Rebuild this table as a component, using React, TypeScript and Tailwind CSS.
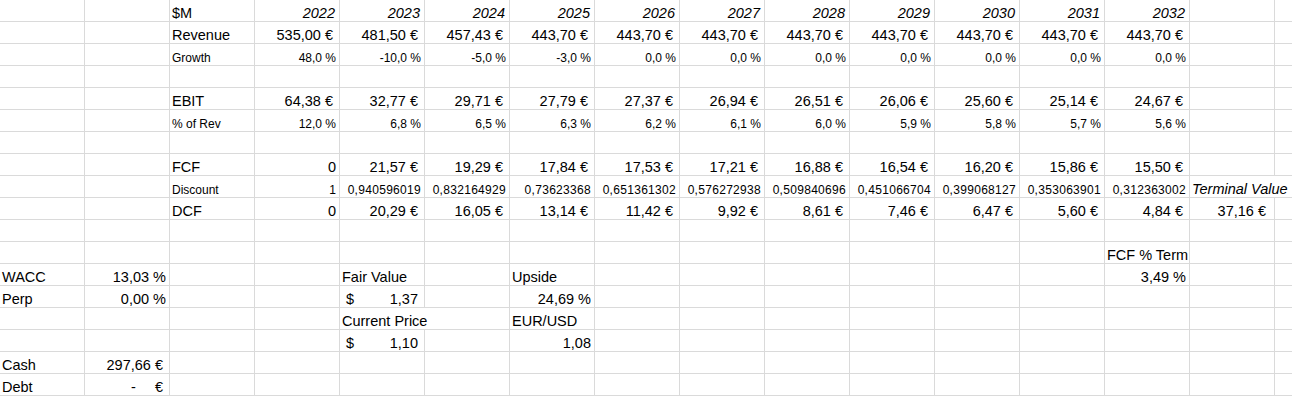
type C = {
  v?: string;
  cls?: string;
  sm?: boolean;
  it?: boolean;
  span?: number;
  acct?: [string, string];
};

const lab = (v: string, sm = false): C => ({ v, sm, cls: 'justify-start pl-[2px]' });
const eur = (v: string, sm = false): C => ({ v, sm, cls: 'justify-end pr-[6px]' });
const num = (v: string, sm = false): C => ({ v, sm, cls: 'justify-end pr-[3px]' });
const E: C = {};

const years = ['2022', '2023', '2024', '2025', '2026', '2027', '2028', '2029', '2030', '2031', '2032'];

const rows: C[][] = [
  [E, E, lab('$M'), ...years.map((y) => ({ v: y, it: true, cls: 'justify-end pr-[4px]' }))],
  [E, E, lab('Revenue'), ...['535,00 €', '481,50 €', '457,43 €', ...Array(8).fill('443,70 €')].map((v) => eur(v))],
  [
    E,
    E,
    lab('Growth', true),
    ...['48,0 %', '-10,0 %', '-5,0 %', '-3,0 %', ...Array(7).fill('0,0 %')].map((v) => num(v, true)),
  ],
  [],
  [
    E,
    E,
    lab('EBIT'),
    ...['64,38 €', '32,77 €', '29,71 €', '27,79 €', '27,37 €', '26,94 €', '26,51 €', '26,06 €', '25,60 €', '25,14 €', '24,67 €'].map(
      (v) => eur(v),
    ),
  ],
  [
    E,
    E,
    lab('% of Rev', true),
    ...['12,0 %', '6,8 %', '6,5 %', '6,3 %', '6,2 %', '6,1 %', '6,0 %', '5,9 %', '5,8 %', '5,7 %', '5,6 %'].map((v) => num(v, true)),
  ],
  [],
  [
    E,
    E,
    lab('FCF'),
    num('0'),
    ...['21,57 €', '19,29 €', '17,84 €', '17,53 €', '17,21 €', '16,88 €', '16,54 €', '16,20 €', '15,86 €', '15,50 €'].map((v) => eur(v)),
  ],
  [
    E,
    E,
    lab('Discount', true),
    num('1', true),
    ...[
      '0,940596019',
      '0,832164929',
      '0,73623368',
      '0,651361302',
      '0,576272938',
      '0,509840696',
      '0,451066704',
      '0,399068127',
      '0,353063901',
      '0,312363002',
    ].map((v) => ({ v, sm: true, cls: 'justify-end pr-[3px] tracking-[0.3px]' })),
    { v: 'Terminal Value', it: true, span: 2, cls: 'justify-start pl-[2px]' },
  ],
  [
    E,
    E,
    lab('DCF'),
    num('0'),
    ...['20,29 €', '16,05 €', '13,14 €', '11,42 €', '9,92 €', '8,61 €', '7,46 €', '6,47 €', '5,60 €', '4,84 €'].map((v) => eur(v)),
    { v: '37,16 €', cls: 'justify-end pr-[8px]' },
  ],
  [],
  [E, E, E, E, E, E, E, E, E, E, E, E, E, lab('FCF % Term')],
  [lab('WACC'), num('13,03 %'), E, E, lab('Fair Value'), E, lab('Upside'), E, E, E, E, E, E, num('3,49 %')],
  [lab('Perp'), num('0,00 %'), E, E, { acct: ['$', '1,37'], cls: 'justify-between pl-[6px] pr-[6px]' }, E, num('24,69 %')],
  [E, E, E, E, { v: 'Current Price', span: 2, cls: 'justify-start pl-[2px]' }, lab('EUR/USD')],
  [E, E, E, E, { acct: ['$', '1,10'], cls: 'justify-between pl-[6px] pr-[6px]' }, E, num('1,08')],
  [lab('Cash'), eur('297,66 €')],
  [lab('Debt'), { acct: ['-', '€'], cls: 'justify-end gap-[19px] pr-[6px]' }],
];

function Cell({ c }: { c: C }) {
  const text = c.sm ? 'text-[12px] leading-[14px]' : 'text-[14.5px] leading-[15px]';
  return (
    <div
      className={`flex items-end overflow-visible whitespace-nowrap border-b border-r border-[#dadada] ${
        c.span === 2 ? 'col-span-2' : ''
      } ${c.cls ?? ''}`}>
      {c.acct ? (
        <>
          <span className={text}>{c.acct[0]}</span>
          <span className={text}>{c.acct[1]}</span>
        </>
      ) : (
        <span className={`${text} ${c.it ? 'italic' : ''}`}>{c.v ?? ''}</span>
      )}
    </div>
  );
}

export default function App() {
  return (
    <div className="h-[396px] w-[1292px] overflow-hidden bg-white font-['Liberation_Sans',Arial,sans-serif] text-black">
      <div className="grid grid-cols-[repeat(16,85px)] grid-rows-[repeat(18,22px)]">
        {rows.map((r, ri) => {
          const cells = [...r];
          let used = cells.reduce((n, c) => n + (c.span ?? 1), 0);
          while (used < 16) {
            cells.push({});
            used++;
          }
          return cells.map((c, ci) => <Cell key={`${ri}-${ci}`} c={c} />);
        })}
      </div>
    </div>
  );
}
